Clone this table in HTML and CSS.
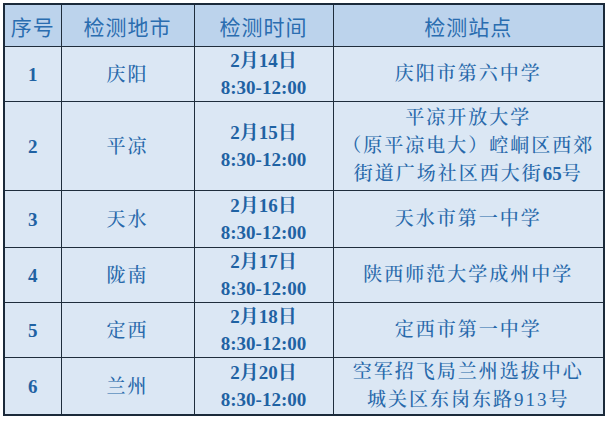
FILE: index.html
```html
<!DOCTYPE html>
<html lang="zh">
<head>
<meta charset="utf-8">
<link rel="stylesheet" href="styles.css">
</head>
<body>
<div class="sheet">
<table class="schedule">
  <colgroup>
    <col class="c-no"><col class="c-city"><col class="c-time"><col class="c-site">
  </colgroup>
  <thead>
    <tr class="r-head"><th>序号</th><th>检测地市</th><th>检测时间</th><th>检测站点</th></tr>
  </thead>
  <tbody>
    <tr class="r1"><td class="num">1</td><td class="city">庆阳</td><td class="time">2月14日<br>8:30-12:00</td><td class="site">庆阳市第六中学</td></tr>
    <tr class="r2"><td class="num">2</td><td class="city">平凉</td><td class="time">2月15日<br>8:30-12:00</td><td class="site">平凉开放大学<br>（原平凉电大）崆峒区西郊<br>街道广场社区西大街<b class="digits">65</b>号</td></tr>
    <tr class="r3"><td class="num">3</td><td class="city">天水</td><td class="time">2月16日<br>8:30-12:00</td><td class="site">天水市第一中学</td></tr>
    <tr class="r4"><td class="num">4</td><td class="city">陇南</td><td class="time">2月17日<br>8:30-12:00</td><td class="site">陕西师范大学成州中学</td></tr>
    <tr class="r5"><td class="num">5</td><td class="city">定西</td><td class="time">2月18日<br>8:30-12:00</td><td class="site">定西市第一中学</td></tr>
    <tr class="r6"><td class="num">6</td><td class="city">兰州</td><td class="time">2月20日<br>8:30-12:00</td><td class="site">空军招飞局兰州选拔中心<br>城关区东岗东路913号</td></tr>
  </tbody>
</table>
</div>
</body>
</html>
```
FILE: styles.css
```css
html, body {
  margin: 0;
  padding: 0;
  background: #ffffff;
}
.sheet {
  width: 607px;
  height: 421px;
  padding: 3px 0 0 3px;
  box-sizing: border-box;
}
.schedule {
  border-collapse: collapse;
  table-layout: fixed;
  width: 600px;
  border: 2px solid #1b2a3a;
}
.c-no { width: 57px; }
.c-city { width: 133px; }
.c-time { width: 139px; }
.c-site { width: 271px; }
.schedule th,
.schedule td {
  border: 1.5px solid #1f2d3c;
  padding: 0;
  text-align: center;
  vertical-align: middle;
  color: #2b6fae;
}
.schedule th {
  background: #bcd3ec;
  font-family: "Noto Sans CJK SC", sans-serif;
  font-weight: 400;
  font-size: 21px;
  letter-spacing: 1px;
  height: 41px;
  line-height: 26px;
  color: #2a6db0;
}
.schedule td {
  background: #dbe7f4;
  font-family: "Liberation Serif", "Noto Serif CJK SC", "Noto Sans CJK SC", serif;
  font-weight: 700;
  font-size: 19px;
  line-height: 27px;
  color: #1f62a3;
}
.schedule td.city,
.schedule td.site {
  font-weight: 500;
  letter-spacing: 2px;
  color: #2869ab;
}
.schedule td.site .digits {
  font-weight: 700;
  letter-spacing: 0;
}
.schedule td.time {
  font-size: 19px;
  line-height: 27px;
}
.schedule td.site {
  line-height: 28px;
}
.r1 td { height: 51px; }
.r2 td { height: 88px; }
.r3 td { height: 56px; }
.r4 td { height: 54px; }
.r5 td { height: 54px; }
.r6 td { height: 55px; }
```
